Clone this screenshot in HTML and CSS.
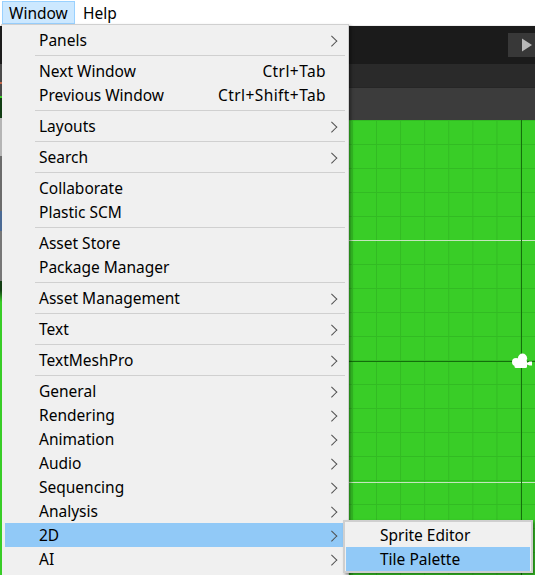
FILE: index.html
```html
<!DOCTYPE html>
<html lang="en">
<head>
<meta charset="utf-8">
<title>Window menu</title>
<link rel="stylesheet" href="styles.css">
</head>
<body>
<div class="app">
  <nav class="menubar">
    <span class="top-item active">Window</span>
    <span class="top-item">Help</span>
  </nav>
  <main class="editor">
    <div class="strip"></div>
    <div class="toolbar"><span class="play"><svg width="12" height="14" viewBox="0 0 12 14"><path d="M1 0.5 L11 7 L1 13.5 Z" fill="#b8b8b8"/></svg></span></div>
    <div class="bar-a"></div>
    <div class="bar-b"></div>
    <div class="scene">
      <i class="hline white l1"></i>
      <i class="hline white l2"></i>
      <i class="hline dark l3"></i>
      <i class="vline"></i>
      <svg class="camera" width="22" height="18" viewBox="0 0 22 18" fill="#fff"><circle cx="11.5" cy="6.2" r="4.6"/><circle cx="5" cy="10" r="4"/><rect x="3.5" y="8" width="12.5" height="8" rx="1.5"/><path d="M16 11 L18.5 9.5 L21 9.5 L21 13.5 L18.5 13.5 L16 12.5 Z"/></svg>
    </div>
  </main>

  <div class="menu main-menu">
    <div class="item sub">Panels</div>
    <div class="sep"></div>
    <div class="item"><span>Next Window</span><kbd>Ctrl+Tab</kbd></div>
    <div class="item"><span>Previous Window</span><kbd>Ctrl+Shift+Tab</kbd></div>
    <div class="sep"></div>
    <div class="item sub">Layouts</div>
    <div class="sep"></div>
    <div class="item sub">Search</div>
    <div class="sep"></div>
    <div class="item">Collaborate</div>
    <div class="item">Plastic SCM</div>
    <div class="sep"></div>
    <div class="item">Asset Store</div>
    <div class="item">Package Manager</div>
    <div class="sep"></div>
    <div class="item sub">Asset Management</div>
    <div class="sep"></div>
    <div class="item sub">Text</div>
    <div class="sep"></div>
    <div class="item sub">TextMeshPro</div>
    <div class="sep"></div>
    <div class="item sub">General</div>
    <div class="item sub">Rendering</div>
    <div class="item sub">Animation</div>
    <div class="item sub">Audio</div>
    <div class="item sub">Sequencing</div>
    <div class="item sub">Analysis</div>
    <div class="item sub on">2D</div>
    <div class="item sub">AI</div>
  </div>

  <div class="menu sub-menu">
    <div class="item">Sprite Editor</div>
    <div class="item on">Tile Palette</div>
  </div>
</div>
</body>
</html>
```
FILE: styles.css
```css
* { box-sizing: border-box; }
html, body { margin: 0; padding: 0; }
body { width: 535px; height: 575px; overflow: hidden; background: #fff; font-family: "Noto Sans", "Open Sans", sans-serif; font-size: 15.5px; color: #000; }
.app { position: relative; width: 535px; height: 575px; overflow: hidden; display: flex; flex-direction: column; }

.menubar { height: 25px; flex: none; display: flex; padding: 1px 0 0 2px; background: #fff; }
.top-item { height: 23px; line-height: 23px; padding: 0 7px 0 6px; border: 1px solid transparent; }
.top-item.active { width: 73px; margin-right: 1px; background: #cce8ff; border-color: #99d1ff; }

.editor { flex: 1; display: flex; flex-direction: column; position: relative; border-top: 1px solid #f0f0f0; }
.strip { position: absolute; left: 0; top: 0; bottom: 0; width: 2px; z-index: 1;
  background: linear-gradient(#1b1b1b 0 38px, #4a4a4a 38px 56px, #c4674a 56px 58px, #4a4a4a 58px 70px, #39cd27 70px 72px, #123d14 72px 92px, #b5b5b5 92px 130px, #6c6c6c 130px 185px, #4b6a94 185px 205px, #777 205px 255px, #123d14 255px 264px, #39cd27 276px); }
.toolbar { height: 38px; flex: none; background: #1b1b1b; display: flex; justify-content: flex-end; padding-top: 7px; }
.play { width: 27px; height: 24px; background: #383838; display: flex; align-items: center; padding-left: 13px; }
.bar-a { height: 24px; flex: none; background: #2a2a2a; border-bottom: 1px solid #262626; }
.bar-b { height: 32px; flex: none; background: #3c3c3c; }
.scene {
  flex: 1; position: relative;
  background-color: #39cd27;
  background-image:
    linear-gradient(to right, #32bb23 1px, transparent 1px),
    linear-gradient(to bottom, #32bb23 1px, transparent 1px);
  background-size: 24.1px 24px;
  background-position: 376px 0;
}
.hline { position: absolute; left: 0; right: 0; height: 1px; }
.hline.white { background: #c4e4bd; }
.hline.dark { background: #136f0b; }
.l1 { top: 120px; }
.l2 { top: 362px; }
.l3 { top: 241px; }
.vline { position: absolute; top: 0; bottom: 0; left: 521px; width: 1px; background: #136f0b; }
.camera { position: absolute; left: 511px; top: 232px; }

.menu { position: absolute; background: #f0f0f0; box-shadow: 2px 2px 3px rgba(0,0,0,.4); }
.main-menu { left: 1px; top: 24px; width: 348px; height: 551px; padding: 3px 3px 0 3px; border: 1px solid #d0d0d0; border-width: 1px 1px 0 1px; }
.sub-menu { left: 343px; top: 520px; width: 190px; height: 53px; padding: 1px; border: 2px solid #cfcfcf; display: flex; flex-direction: column; }

.item { position: relative; height: 24px; line-height: 25px; padding-left: 34px; padding-right: 19px; display: flex; justify-content: space-between; white-space: nowrap; flex: none; }
.item.on { background: #91c9f7; }
kbd { font: inherit; letter-spacing: .42px; }
.item.sub::after { content: ""; position: absolute; right: 10px; top: 8.5px; width: 6.5px; height: 6.5px; border-top: 1.3px solid #505050; border-right: 1.3px solid #505050; transform: rotate(45deg); }
.sep { height: 7px; padding-top: 3px; margin-left: 30px; }
.sep::before { content: ""; display: block; height: 1px; background: #d0d0d0; }
```
